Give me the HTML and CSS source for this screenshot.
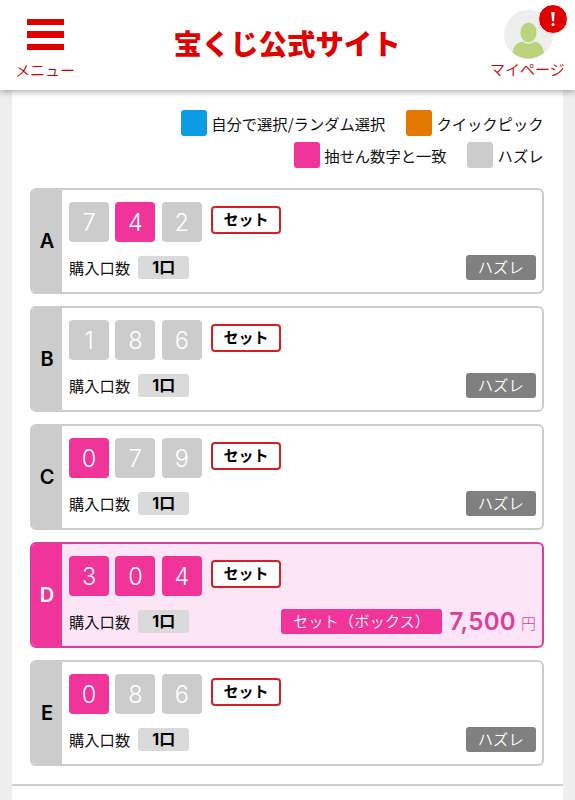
FILE: index.html
```html
<!DOCTYPE html>
<html lang="ja">
<head>
    <meta charset="UTF-8">
    <meta name="viewport" content="width=device-width, initial-scale=1.0">
    <title>宝くじ公式サイト</title>
    <link rel="stylesheet" href="styles.css">
</head>
<body>
    <header class="header">
        <a class="menu-button">
            <span class="menu-icon"><i></i><i></i><i></i></span>
            <span class="menu-label">メニュー</span>
        </a>
        <h1 class="logo">宝くじ公式サイト</h1>
        <a class="mypage">
            <svg class="avatar" viewBox="0 0 49 49">
                <circle cx="24.5" cy="24.5" r="24.5" fill="#eeeeee"/>
                <path d="M8.500 42.500C9.500 36 13 32.700 18.500 31.500Q24.500 36 30.500 31.500C36 32.700 39 36 40 42.500Q33 48.500 24.500 48.500Q15 48.500 8.500 42.500Z" fill="#b9d47c"/>
                <ellipse cx="24.5" cy="22.500" rx="8.600" ry="10.300" fill="#b9d47c" stroke="#eeeeee" stroke-width="1"/>
            </svg>
            <span class="mypage-label">マイページ</span>
            <svg class="alert" viewBox="0 0 30 30">
                <circle cx="15" cy="15" r="14.500" fill="#e00000" stroke="#fff"/>
                <path d="M13.400 8H16.600L16 17.200H14Z" fill="#fff"/>
                <circle cx="15" cy="20.500" r="1.600" fill="#fff"/>
            </svg>
        </a>
    </header>

    <main class="content">
        <ul class="legend">
            <li><span class="swatch blue"></span>自分で選択/ランダム選択</li>
            <li><span class="swatch orange"></span>クイックピック</li>
            <li><span class="swatch pink"></span>抽せん数字と一致</li>
            <li><span class="swatch gray"></span>ハズレ</li>
        </ul>

        <div class="tickets">
            <section class="ticket">
                <div class="letter">A</div>
                <div class="ticket-body">
                    <div class="numbers">
                        <span class="num">7</span><span class="num hit">4</span><span class="num">2</span>
                        <span class="type">セット</span>
                    </div>
                    <div class="detail">
                        <span class="label">購入口数</span><span class="count">1口</span>
                        <span class="result">ハズレ</span>
                    </div>
                </div>
            </section>

            <section class="ticket">
                <div class="letter">B</div>
                <div class="ticket-body">
                    <div class="numbers">
                        <span class="num">1</span><span class="num">8</span><span class="num">6</span>
                        <span class="type">セット</span>
                    </div>
                    <div class="detail">
                        <span class="label">購入口数</span><span class="count">1口</span>
                        <span class="result">ハズレ</span>
                    </div>
                </div>
            </section>

            <section class="ticket">
                <div class="letter">C</div>
                <div class="ticket-body">
                    <div class="numbers">
                        <span class="num hit">0</span><span class="num">7</span><span class="num">9</span>
                        <span class="type">セット</span>
                    </div>
                    <div class="detail">
                        <span class="label">購入口数</span><span class="count">1口</span>
                        <span class="result">ハズレ</span>
                    </div>
                </div>
            </section>

            <section class="ticket win">
                <div class="letter">D</div>
                <div class="ticket-body">
                    <div class="numbers">
                        <span class="num hit">3</span><span class="num hit">0</span><span class="num hit">4</span>
                        <span class="type">セット</span>
                    </div>
                    <div class="detail">
                        <span class="label">購入口数</span><span class="count">1口</span>
                        <span class="result">セット（ボックス）</span>
                        <span class="prize">7,500</span><span class="yen">円</span>
                    </div>
                </div>
            </section>

            <section class="ticket">
                <div class="letter">E</div>
                <div class="ticket-body">
                    <div class="numbers">
                        <span class="num hit">0</span><span class="num">8</span><span class="num">6</span>
                        <span class="type">セット</span>
                    </div>
                    <div class="detail">
                        <span class="label">購入口数</span><span class="count">1口</span>
                        <span class="result">ハズレ</span>
                    </div>
                </div>
            </section>
        </div>
        <hr class="divider">
    </main>
</body>
</html>
```
FILE: styles.css
```css
* {
    margin: 0;
    padding: 0;
    box-sizing: border-box;
}

body {
    font-family: "Noto Sans CJK JP", sans-serif;
    background: #eeeeee;
    color: #111;
    height: 100vh;
    overflow: hidden;
}

/* Header */
.header {
    position: relative;
    z-index: 1;
    display: flex;
    justify-content: space-between;
    height: 90px;
    padding: 0 10px 0 15px;
    background: #fff;
    box-shadow: 0 1px 7px rgba(0, 0, 0, 0.4);
    color: #d00000;
}

.menu-button {
    width: 61px;
    padding-top: 19px;
}

.menu-icon {
    display: flex;
    flex-direction: column;
    gap: 6px;
    width: 37px;
    margin-left: 12px;
}

.menu-icon i {
    height: 6.3px;
    background: #e00000;
}

.menu-label {
    display: block;
    margin-top: 10px;
    font-size: 15px;
    font-weight: 350;
    line-height: 20px;
    white-space: nowrap;
}

.logo {
    padding-top: 23px;
    margin-left: 8px;
    font-size: 28.4px;
    font-weight: 900;
    line-height: 40px;
    color: #e00000;
    white-space: nowrap;
}

.mypage {
    position: relative;
    width: 75px;
    padding-top: 10px;
}

.avatar {
    display: block;
    width: 49px;
    height: 49px;
    margin-left: 14px;
}

.mypage-label {
    display: block;
    font-size: 15px;
    font-weight: 350;
    line-height: 20px;
    white-space: nowrap;
}

.alert {
    position: absolute;
    top: 4px;
    left: 48px;
    width: 30px;
    height: 30px;
}

/* Legend */
.content {
    height: 710px;
    margin: 0 12px;
    padding: 20px 18px 0;
    background: #fff;
}

.legend {
    display: flex;
    flex-wrap: wrap;
    justify-content: flex-end;
    gap: 6px 20.5px;
    padding-right: 1.5px;
    list-style: none;
    font-size: 15.3px;
    line-height: 25px;
}

.legend li {
    display: flex;
    align-items: center;
    gap: 4.5px;
}

.swatch {
    width: 26px;
    height: 26px;
    border-radius: 3px;
}

.blue {
    background: #0d9be3;
}

.orange {
    background: #e47700;
}

.pink {
    background: #f03499;
}

.gray {
    background: #cccccc;
}

/* Tickets */
.tickets {
    display: flex;
    flex-direction: column;
    gap: 12px;
    margin-top: 20px;
}

.ticket {
    display: flex;
    width: 514px;
    height: 106px;
    border: 2px solid #cccccc;
    border-radius: 6px;
    overflow: hidden;
}

.letter {
    width: 30px;
    flex-shrink: 0;
    background: #cccccc;
    color: #000;
    font-family: Inter, sans-serif;
    font-size: 20px;
    font-weight: 600;
    line-height: 102px;
    text-align: center;
}

.ticket-body {
    flex: 1;
    padding: 12px 6px 0 7px;
}

.numbers {
    display: flex;
    gap: 6.4px;
}

.num {
    width: 40px;
    height: 40px;
    border-radius: 4px;
    background: #cccccc;
    color: #fff;
    font-family: Inter, sans-serif;
    font-size: 23.5px;
    font-weight: 300;
    line-height: 42px;
    text-align: center;
}

.hit {
    background: #f03499;
}

.type {
    width: 70.5px;
    height: 28px;
    margin: 4px 0 0 2.5px;
    border: 2px solid #d42020;
    border-radius: 4px;
    background: #fff;
    color: #000;
    font-size: 15px;
    font-weight: 700;
    line-height: 21px;
    text-align: center;
}

.detail {
    display: flex;
    align-items: center;
    height: 25px;
    margin-top: 13px;
    font-size: 15.3px;
    line-height: 22px;
}

.label {
    margin-top: -2px;
}

.count {
    width: 51px;
    height: 23px;
    margin-left: 8px;
    border-radius: 3px;
    background: #dadada;
    color: #000;
    font-family: Inter, "Noto Sans CJK JP", sans-serif;
    font-size: 16px;
    font-weight: 700;
    line-height: 23px;
    text-align: center;
}

.result {
    height: 25px;
    margin-left: auto;
    padding: 0 12.3px;
    border-radius: 3px;
    background: #808080;
    color: #fff;
    font-weight: 350;
    line-height: 22px;
}

.win {
    border-color: #dc3f9b;
    background: #fce5f7;
}

.win .letter {
    background: #f03499;
    color: #fff;
}

.win .result {
    background: #f03499;
}

.prize {
    margin-left: 7px;
    color: #dc3f9b;
    font-family: Inter, sans-serif;
    font-size: 24px;
    font-weight: 600;
    letter-spacing: 0.3px;
}

.yen {
    margin: 2px 0 0 5px;
    color: #dc3f9b;
    font-size: 15px;
    font-weight: 300;
}

.divider {
    height: 2px;
    margin: 18px -18px 0;
    border: 0;
    background: #cfcfcf;
}
```
